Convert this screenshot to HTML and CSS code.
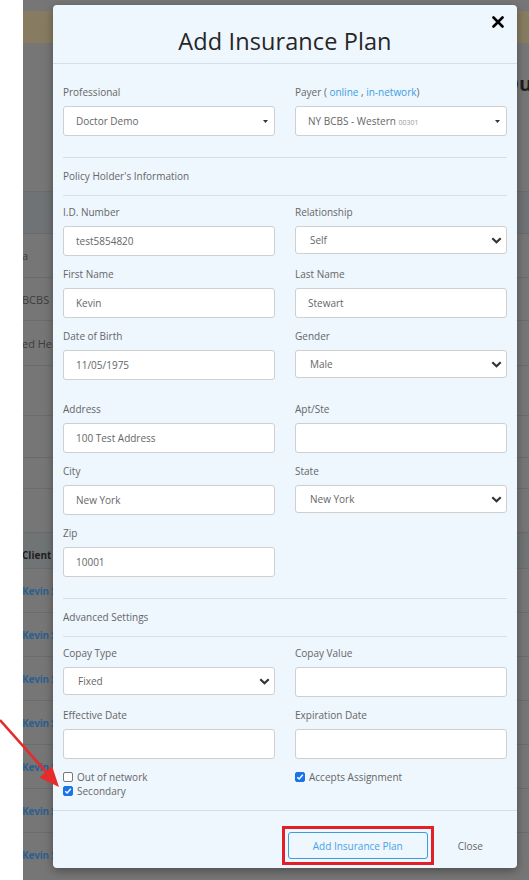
FILE: index.html
```html
<!DOCTYPE html>
<html>
<head>
<meta charset="utf-8">
<title>Add Insurance Plan</title>
<link rel="stylesheet" href="styles.css">
</head>
<body>
<div class="page">
  <div class="sidebar"></div>
  <div class="main">
    <div class="topbar"></div>
    <div class="page-heading">Ou</div>
    <div class="bg-row band"></div>
    <div class="bg-row r44"><span class="cell">a</span></div>
    <div class="bg-row r43"><span class="cell">BCBS</span></div>
    <div class="bg-row r45"><span class="cell">ed Hea</span></div>
    <div class="bg-row r50"></div>
    <div class="bg-row r42"></div>
    <div class="bg-row r31"></div>
    <div class="bg-row r44"></div>
    <div class="bg-row thead"><span class="cell strong">Client</span></div>
    <div class="bg-row r44"><span class="cell link">Kevin S</span></div>
    <div class="bg-row r44"><span class="cell link">Kevin S</span></div>
    <div class="bg-row r44"><span class="cell link">Kevin S</span></div>
    <div class="bg-row r44"><span class="cell link">Kevin S</span></div>
    <div class="bg-row r44"><span class="cell link">Kevin S</span></div>
    <div class="bg-row r44"><span class="cell link">Kevin S</span></div>
    <div class="bg-row r44"><span class="cell link">Kevin S</span></div>
  </div>
</div>

<div class="modal">
  <div class="modal-header">
    <h2 class="modal-title">Add Insurance Plan</h2>
    <button class="close-btn" aria-label="Close">
      <svg width="12" height="12" viewBox="0 0 12 12"><path d="M1.5 1.5 L10.5 10.5 M10.5 1.5 L1.5 10.5" stroke="#000" stroke-width="2.6" stroke-linecap="round"/></svg>
    </button>
  </div>

  <div class="modal-body">
    <div class="grid">
      <div class="group">
        <label class="lbl">Professional</label>
        <div class="control select pad12">
          <span>Doctor Demo</span>
          <svg class="caret" width="5" height="3" viewBox="0 0 5 3"><path d="M0 0 H5 L2.5 3 Z" fill="#333"/></svg>
        </div>
      </div>
      <div class="group">
        <label class="lbl">Payer ( <a class="lnk">online</a> , <a class="lnk">in-network</a>)</label>
        <div class="control select pad12">
          <span>NY BCBS - Western <small class="code">00301</small></span>
          <svg class="caret" width="5" height="3" viewBox="0 0 5 3"><path d="M0 0 H5 L2.5 3 Z" fill="#333"/></svg>
        </div>
      </div>
    </div>

    <div class="section-title">Policy Holder's Information</div>

    <div class="grid">
      <div class="group">
        <label class="lbl">I.D. Number</label>
        <input class="control" type="text" value="test5854820">
      </div>
      <div class="group">
        <label class="lbl">Relationship</label>
        <div class="control select short pad14">
          <span>Self</span>
          <svg class="chev" width="11" height="7" viewBox="0 0 11 7"><path d="M1.3 1.3 L5.5 5.3 L9.7 1.3" fill="none" stroke="#333" stroke-width="2.2"/></svg>
        </div>
      </div>
      <div class="group">
        <label class="lbl">First Name</label>
        <input class="control" type="text" value="Kevin">
      </div>
      <div class="group">
        <label class="lbl">Last Name</label>
        <input class="control" type="text" value="Stewart">
      </div>
      <div class="group">
        <label class="lbl">Date of Birth</label>
        <input class="control" type="text" value="11/05/1975">
      </div>
      <div class="group">
        <label class="lbl">Gender</label>
        <div class="control select short pad14">
          <span>Male</span>
          <svg class="chev" width="11" height="7" viewBox="0 0 11 7"><path d="M1.3 1.3 L5.5 5.3 L9.7 1.3" fill="none" stroke="#333" stroke-width="2.2"/></svg>
        </div>
      </div>
    </div>

    <div class="grid spaced">
      <div class="group">
        <label class="lbl">Address</label>
        <input class="control" type="text" value="100 Test Address">
      </div>
      <div class="group">
        <label class="lbl">Apt/Ste</label>
        <input class="control" type="text" value="">
      </div>
      <div class="group">
        <label class="lbl">City</label>
        <input class="control" type="text" value="New York">
      </div>
      <div class="group">
        <label class="lbl">State</label>
        <div class="control select short pad14">
          <span>New York</span>
          <svg class="chev" width="11" height="7" viewBox="0 0 11 7"><path d="M1.3 1.3 L5.5 5.3 L9.7 1.3" fill="none" stroke="#333" stroke-width="2.2"/></svg>
        </div>
      </div>
      <div class="group">
        <label class="lbl">Zip</label>
        <input class="control" type="text" value="10001">
      </div>
    </div>

    <div class="section-title">Advanced Settings</div>

    <div class="grid">
      <div class="group">
        <label class="lbl">Copay Type</label>
        <div class="control select short pad14">
          <span>Fixed</span>
          <svg class="chev" width="11" height="7" viewBox="0 0 11 7"><path d="M1.3 1.3 L5.5 5.3 L9.7 1.3" fill="none" stroke="#333" stroke-width="2.2"/></svg>
        </div>
      </div>
      <div class="group">
        <label class="lbl">Copay Value</label>
        <input class="control" type="text" value="">
      </div>
      <div class="group">
        <label class="lbl">Effective Date</label>
        <input class="control" type="text" value="">
      </div>
      <div class="group">
        <label class="lbl">Expiration Date</label>
        <input class="control" type="text" value="">
      </div>
      <div class="checks">
        <div class="check"><span class="box"></span><span>Out of network</span></div>
        <div class="check"><span class="box on"><svg width="8" height="8" viewBox="0 0 8 8"><path d="M1.3 4.2 L3.2 6 L6.8 1.8" fill="none" stroke="#fff" stroke-width="1.5"/></svg></span><span>Secondary</span></div>
      </div>
      <div class="checks">
        <div class="check"><span class="box on"><svg width="8" height="8" viewBox="0 0 8 8"><path d="M1.3 4.2 L3.2 6 L6.8 1.8" fill="none" stroke="#fff" stroke-width="1.5"/></svg></span><span>Accepts Assignment</span></div>
      </div>
    </div>
  </div>

  <div class="modal-footer">
    <span class="highlight"><button class="btn-primary">Add Insurance Plan</button></span>
    <button class="btn-close">Close</button>
  </div>
</div>

<svg class="arrow" width="70" height="80" viewBox="0 0 70 80">
  <path d="M0 5 L47 58" stroke="#e52b2b" stroke-width="2.6"/>
  <polygon points="59,72 39.5,62.5 52,51" fill="#e52b2b"/>
</svg>
</body>
</html>
```

FILE: styles.css
```css
* { box-sizing: border-box; }

html, body {
  margin: 0;
  padding: 0;
}

body {
  width: 529px;
  height: 880px;
  overflow: hidden;
  font-family: "Open Sans", "Liberation Sans", sans-serif;
  position: relative;
  background: #fff;
}

/* ---------- background page (dimmed) ---------- */
.page {
  display: flex;
  height: 880px;
}

.sidebar {
  width: 23px;
  background: #ffffff;
}

.main {
  flex: 1;
  background: #767676;
  overflow: hidden;
  display: flex;
  flex-direction: column;
}

.topbar {
  margin-top: 11px;
  height: 32px;
  background: #877c61;
}

.page-heading {
  height: 148px;
  padding: 27px 0 0 480px;
  font-size: 20px;
  font-weight: 700;
  color: #1f1f1f;
  white-space: nowrap;
}

.bg-row {
  display: flex;
  align-items: center;
  border-top: 1px solid #6b6b6b;
  white-space: nowrap;
}

.band { height: 42px; background: #707375; }
.r31 { height: 31px; }
.r42 { height: 42px; }
.r43 { height: 43px; }
.r44 { height: 44px; }
.r45 { height: 45px; }
.r50 { height: 50px; }

.thead {
  height: 36px;
  align-items: flex-start;
  padding-top: 15px;
  background: #717475;
}

.cell {
  margin-left: -1px;
  font-size: 11px;
  color: #3d3d3d;
  max-width: 31px;
  overflow: hidden;
}

.cell.strong {
  font-weight: 700;
  font-size: 10px;
  color: #1e1e1e;
}

.cell.link {
  font-weight: 700;
  font-size: 10px;
  letter-spacing: -0.2px;
  color: #2d5f8e;
}

/* ---------- modal ---------- */
.modal {
  position: absolute;
  left: 53px;
  top: 5px;
  width: 464px;
  height: 863px;
  background: #eef6fe;
  border-radius: 4px;
  box-shadow: 0 3px 10px rgba(0, 0, 0, 0.35);
  display: flex;
  flex-direction: column;
}

.modal-header {
  position: relative;
  height: 59px;
  padding-top: 14px;
  border-bottom: 1px solid #d6dee6;
  display: flex;
  justify-content: center;
  align-items: center;
}

.modal-title {
  margin: 0;
  font-size: 23.5px;
  font-weight: 500;
  color: #262626;
  letter-spacing: 0.1px;
}

.close-btn {
  position: absolute;
  top: 11px;
  right: 13px;
  width: 12px;
  height: 12px;
  padding: 0;
  border: 0;
  background: none;
  display: flex;
}

.modal-body {
  flex: 1;
  padding: 21px 10px 0;
}

.grid {
  display: grid;
  grid-template-columns: 1fr 1fr;
  column-gap: 20px;
  row-gap: 11px;
}

.grid.spaced {
  margin-top: 22px;
}

.group {
  display: flex;
  flex-direction: column;
}

.lbl {
  font-size: 10px;
  line-height: 14px;
  color: #666;
  margin-bottom: 7px;
}

.lnk {
  color: #3a9fe2;
}

.control {
  height: 30px;
  width: 100%;
  background: #fff;
  border: 1px solid #cfcfcf;
  border-radius: 3px;
  font-family: "Open Sans", "Liberation Sans", sans-serif;
  font-size: 10px;
  color: #666;
  padding: 0 12px;
  outline: none;
}

.select {
  display: flex;
  align-items: center;
  justify-content: space-between;
}

.select.short {
  height: 28px;
}

.pad12 { padding: 0 6px 0 12px; }
.pad14 { padding: 0 4px 0 14px; }

.code {
  font-size: 7px;
  color: #999;
}

.section-title {
  margin: 21px 0 9px;
  padding: 11px 0;
  line-height: 15px;
  font-size: 10px;
  color: #666;
  border-top: 1px solid #d8dee4;
  border-bottom: 1px solid #d8dee4;
}

.checks {
  display: flex;
  flex-direction: column;
}

.check {
  display: flex;
  align-items: center;
  gap: 4px;
  height: 14px;
  font-size: 10px;
  color: #666;
}

.box {
  width: 10px;
  height: 10px;
  border: 1px solid #777;
  border-radius: 2px;
  background: #fff;
  display: flex;
  align-items: center;
  justify-content: center;
}

.box.on {
  background: #1a73e8;
  border-color: #1a73e8;
}

.modal-footer {
  height: 58px;
  border-top: 1px solid #d8dee4;
  display: flex;
  justify-content: flex-end;
  align-items: flex-start;
  padding: 15px 22px 0 0;
}

.highlight {
  display: flex;
  border: 3px solid #e21f26;
  padding: 3px;
}

.btn-primary {
  width: 140px;
  height: 27px;
  background: #eef6fe;
  border: 1px solid #3d9be0;
  border-radius: 3px;
  font-family: "Open Sans", "Liberation Sans", sans-serif;
  font-size: 10px;
  color: #4aa3df;
}

.btn-close {
  margin: 6px 0 0 12px;
  height: 27px;
  padding: 0 12px;
  background: none;
  border: 0;
  font-family: "Open Sans", "Liberation Sans", sans-serif;
  font-size: 10px;
  color: #666;
}

/* annotation arrow */
.arrow {
  position: absolute;
  left: 0;
  top: 715px;
}
```
